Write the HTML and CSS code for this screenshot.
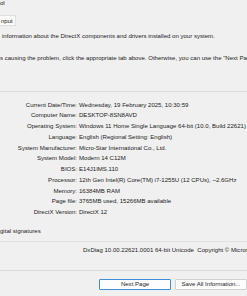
FILE: index.html
```html
<!DOCTYPE html>
<html>
<head>
<meta charset="utf-8">
<link rel="stylesheet" href="styles.css">
</head>
<body>
<div class="win">
  <div class="menu">ol</div>
  <div class="tabs"><span class="tab">nput</span></div>
  <p class="desc d1">information about the DirectX components and drivers installed on your system.</p>
  <p class="desc d2">s causing the problem, click the appropriate tab above. Otherwise, you can use the "Next Page"</p>
  <div class="sep s1"></div>
  <div class="info">
    <span class="k">Current Date/Time:</span><span class="v">Wednesday, 19 February 2025, 10:30:59</span>
    <span class="k">Computer Name:</span><span class="v">DESKTOP-8SN8AVD</span>
    <span class="k">Operating System:</span><span class="v">Windows 11 Home Single Language 64-bit (10.0, Build 22621)</span>
    <span class="k">Language:</span><span class="v">English (Regional Setting: English)</span>
    <span class="k">System Manufacturer:</span><span class="v">Micro-Star International Co., Ltd.</span>
    <span class="k">System Model:</span><span class="v">Modern 14 C12M</span>
    <span class="k">BIOS:</span><span class="v">E14J1IMS.110</span>
    <span class="k">Processor:</span><span class="v">12th Gen Intel(R) Core(TM) i7-1255U (12 CPUs), ~2.6GHz</span>
    <span class="k">Memory:</span><span class="v">16384MB RAM</span>
    <span class="k">Page file:</span><span class="v">3765MB used, 15266MB available</span>
    <span class="k">DirectX Version:</span><span class="v">DirectX 12</span>
  </div>
  <div class="check">gital signatures</div>
  <div class="sep s2"></div>
  <div class="ver">DxDiag 10.00.22621.0001 64-bit Unicode&nbsp; Copyright © Microsoft</div>
  <div class="sep s3"></div>
  <div class="buttons">
    <button class="btn primary">Next Page</button>
    <button class="btn">Save All Information...</button>
  </div>
</div>
</body>
</html>
```
FILE: styles.css
```css
html, body {
  margin: 0;
  padding: 0;
  background: #f0f0f0;
}
body {
  width: 247px;
  height: 296px;
  overflow: hidden;
  font-family: "Liberation Sans", Arial, sans-serif;
  font-size: 6.05px;
  color: #1c1c1c;
}
.win {
  display: flex;
  flex-direction: column;
  white-space: nowrap;
}
.menu {
  margin-top: -2px;
  height: 10px;
  line-height: 10px;
}
.tabs {
  margin-top: 7px;
  display: flex;
}
.tab {
  display: block;
  height: 11px;
  line-height: 11px;
  padding: 0 2px 0 1px;
  background: #fbfbfb;
  border: 1px solid #dedede;
  border-left: none;
  box-sizing: border-box;
}
.desc {
  margin: 0;
  line-height: 10px;
  height: 10px;
}
.d1 { margin-top: 5px; padding-left: 2px; }
.d2 { margin-top: 11.5px; }
.sep {
  height: 1px;
  background: #dadada;
}
.s1 { margin-top: 28.5px; }
.info {
  margin-top: 7.6px;
  display: grid;
  grid-template-columns: 77px auto;
  column-gap: 2px;
  line-height: 10.75px;
}
.k { text-align: right; }
.check {
  margin-top: 8px;
  line-height: 10px;
  height: 10px;
}
.s2 { margin-top: 5px; background: #e2e2e2; }
.ver {
  margin-top: 3px;
  padding-left: 83px;
  line-height: 10px;
  height: 10px;
}
.s3 { margin-top: 15px; }
.buttons {
  margin-top: 8px;
  display: flex;
  justify-content: flex-end;
  gap: 4px;
}
.btn {
  width: 72px;
  height: 11px;
  padding: 0;
  font: inherit;
  color: #1c1c1c;
  background: #fdfdfd;
  border: 1px solid #d0d0d0;
  border-radius: 1px;
  line-height: 9px;
}
.btn.primary {
  border-color: #3c8fd8;
}
```
